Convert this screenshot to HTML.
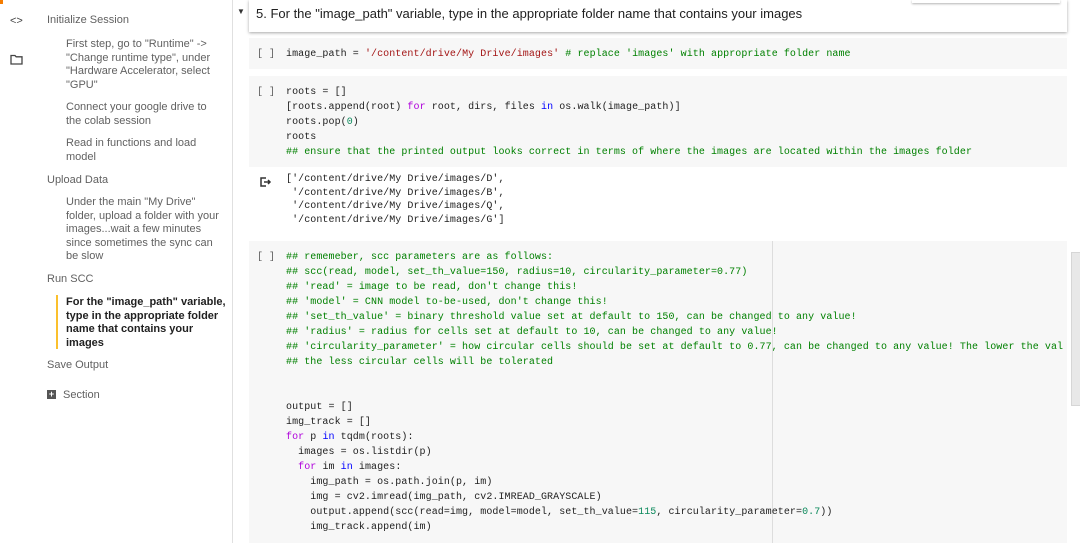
<!DOCTYPE html><html><head><style>
body{margin:0;width:1080px;height:543px;overflow:hidden;background:#fff;font-family:"Liberation Sans",sans-serif;position:relative}
.a{position:absolute}
.sb{font-size:11px;color:#616161;line-height:13.5px}
.cell{position:absolute;left:249px;width:818px;background:#f7f7f7}
pre{margin:0;font-family:"Liberation Mono",monospace;font-size:10px;letter-spacing:.07px;line-height:15px;color:#212121;position:absolute;left:37px}
.br{position:absolute;left:8px;font-family:"Liberation Mono",monospace;font-size:10px;color:#616161;line-height:15px}
.s{color:#a31515}.c{color:#008000}.k{color:#af00db}.b{color:#0000ff}.n{color:#09885a}
</style></head><body>
<div class="a" style="left:0;top:0;width:3px;height:4px;background:#f57c00"></div>
<div class="a" style="left:232px;top:0;width:1px;height:543px;background:#e0e0e0"></div>
<div class="a" style="left:10px;top:15px;font-size:11px;color:#444">&lt;&gt;</div>
<svg class="a" style="left:10px;top:54px" width="13" height="11"><path d="M1 1.5h4l1.2 1.3H12v7.2H1z" fill="none" stroke="#444" stroke-width="1.3"/></svg>
<div class="a sb" style="left:47px;top:14px">Initialize Session</div>
<div class="a sb" style="left:66px;top:38px;width:152px">First step, go to "Runtime" -&gt; "Change runtime type", under "Hardware Accelerator, select "GPU"</div>
<div class="a sb" style="left:66px;top:101px;width:152px">Connect your google drive to the colab session</div>
<div class="a sb" style="left:66px;top:137px;width:152px">Read in functions and load model</div>
<div class="a sb" style="left:47px;top:174px">Upload Data</div>
<div class="a sb" style="left:66px;top:196px;width:160px">Under the main "My Drive" folder, upload a folder with your images...wait a few minutes since sometimes the sync can be slow</div>
<div class="a sb" style="left:47px;top:273px">Run SCC</div>
<div class="a" style="left:56px;top:295px;width:2px;height:54px;background:#fbc02d"></div>
<div class="a sb" style="left:66px;top:296px;width:160px;color:#212121;font-weight:bold">For the "image_path" variable, type in the appropriate folder name that contains your images</div>
<div class="a sb" style="left:47px;top:359px">Save Output</div>
<div class="a" style="left:47px;top:390px;width:9px;height:9px;background:#555;color:#fff;font-size:9px;line-height:9px;text-align:center;font-weight:bold">+</div>
<div class="a sb" style="left:63px;top:389px">Section</div>

<div class="a" style="left:249px;top:0;width:818px;height:32px;background:#fff;box-shadow:0 1px 3px rgba(0,0,0,.35)"></div>
<div class="a" style="left:912px;top:0;width:148px;height:3px;background:#fff;box-shadow:0 1px 2px rgba(0,0,0,.3)"></div>
<div class="a" style="left:237px;top:7px;font-size:8px;color:#333">▼</div>
<div class="a" style="left:256px;top:6px;font-size:13px;color:#212121">5. For the "image_path" variable, type in the appropriate folder name that contains your images</div>

<div class="cell" style="top:38px;height:31px"><span class="br" style="top:9px">[ ]</span><pre style="top:9px">image_path = <span class="s">'/content/drive/My Drive/images'</span> <span class="c"># replace 'images' with appropriate folder name</span></pre></div>

<div class="cell" style="top:76px;height:91px"><span class="br" style="top:9px">[ ]</span><pre style="top:9px">roots = []
[roots.append(root) <span class="k">for</span> root, dirs, files <span class="b">in</span> os.walk(image_path)]
roots.pop(<span class="n">0</span>)
roots
<span class="c">## ensure that the printed output looks correct in terms of where the images are located within the images folder</span></pre></div>

<svg class="a" style="left:260px;top:177px" width="12" height="10"><path d="M6 1H1v8h5M4 5h6M8 3l2 2-2 2" fill="none" stroke="#333" stroke-width="1.5"/></svg>
<pre style="left:286px;top:173px;line-height:13.5px">['/content/drive/My Drive/images/D',
 '/content/drive/My Drive/images/B',
 '/content/drive/My Drive/images/Q',
 '/content/drive/My Drive/images/G']</pre>

<div class="cell" style="top:241px;height:302px;overflow:hidden"><span class="br" style="top:9px">[ ]</span>
<div class="a" style="left:523px;top:0;width:1px;height:302px;background:#ddd"></div>
<pre style="top:9px;white-space:pre"><span class="c">## rememeber, scc parameters are as follows:
## scc(read, model, set_th_value=150, radius=10, circularity_parameter=0.77)
## 'read' = image to be read, don't change this!
## 'model' = CNN model to-be-used, don't change this!
## 'set_th_value' = binary threshold value set at default to 150, can be changed to any value!
## 'radius' = radius for cells set at default to 10, can be changed to any value!
## 'circularity_parameter' = how circular cells should be set at default to 0.77, can be changed to any value! The lower the val
## the less circular cells will be tolerated</span>


output = []
img_track = []
<span class="k">for</span> p <span class="b">in</span> tqdm(roots):
  images = os.listdir(p)
  <span class="k">for</span> im <span class="b">in</span> images:
    img_path = os.path.join(p, im)
    img = cv2.imread(img_path, cv2.IMREAD_GRAYSCALE)
    output.append(scc(read=img, model=model, set_th_value=<span class="n">115</span>, circularity_parameter=<span class="n">0.7</span>))
    img_track.append(im)</pre></div>
<div class="a" style="left:1071px;top:252px;width:9px;height:152px;background:#e8e8e8;border:1px solid #d6d6d6"></div>
</body></html>
